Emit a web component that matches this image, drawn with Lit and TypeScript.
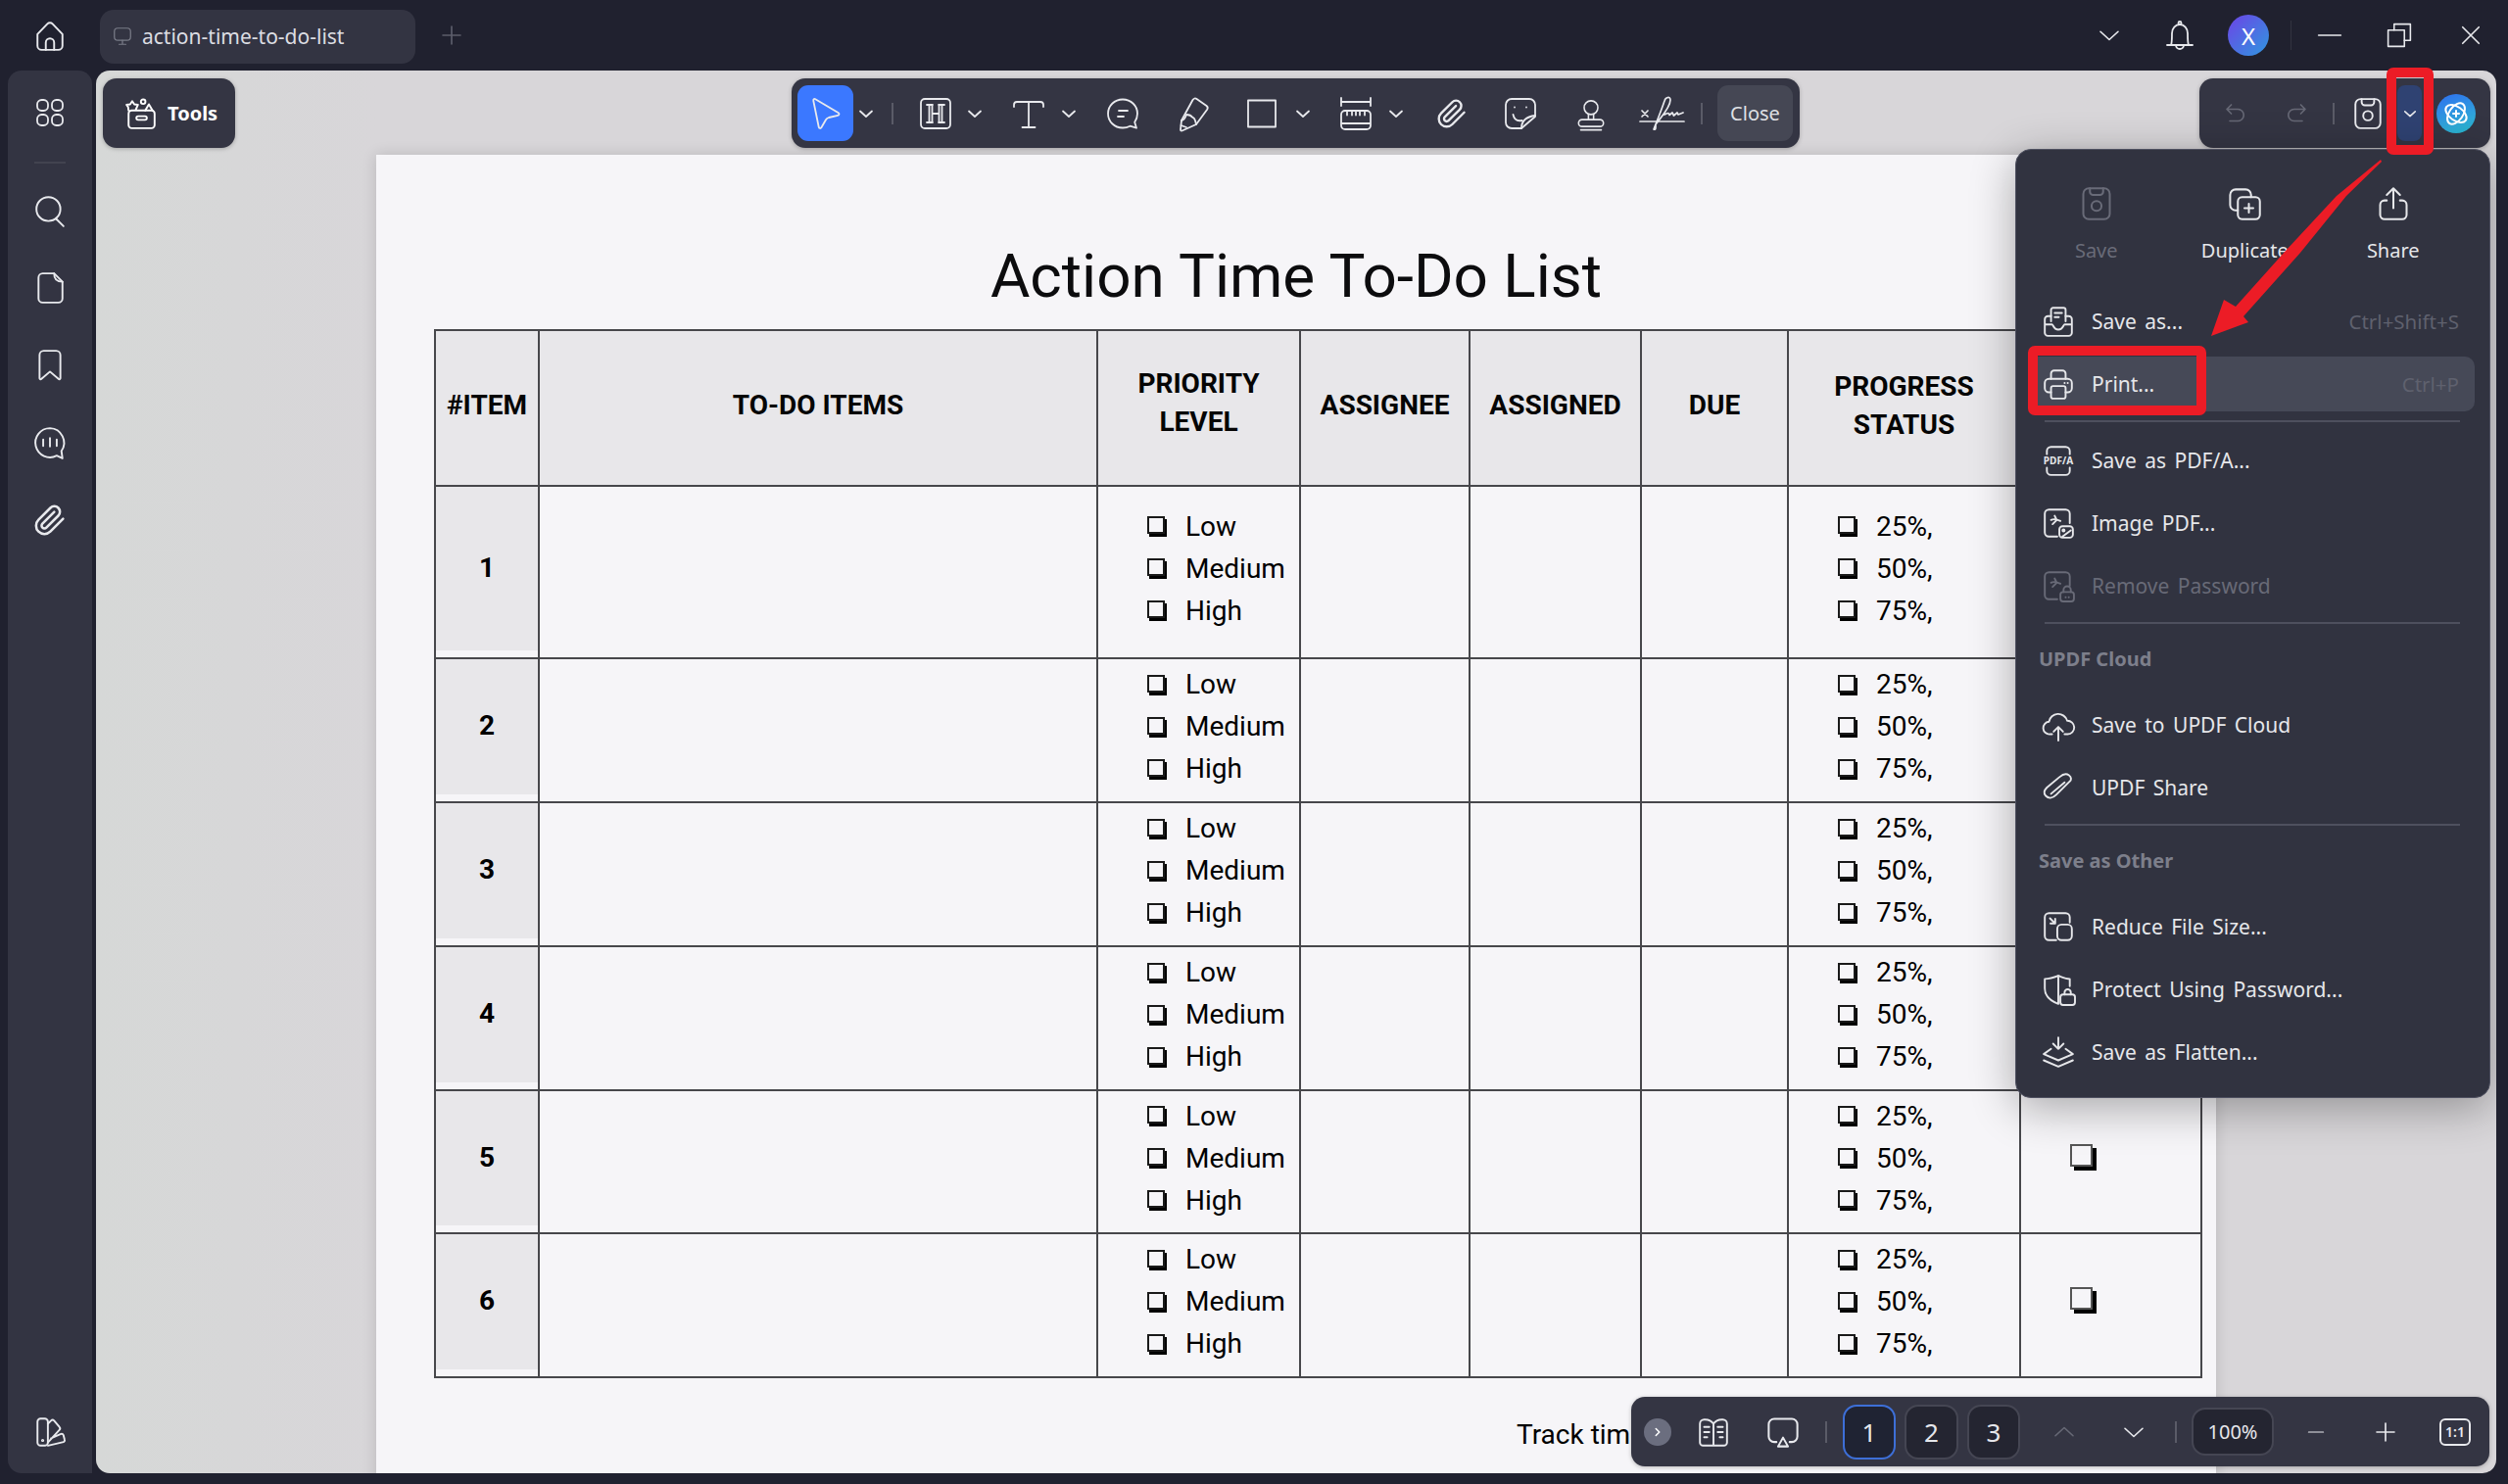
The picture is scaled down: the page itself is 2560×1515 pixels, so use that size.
import { LitElement, html, css, svg, TemplateResult } from "lit";
import { customElement } from "lit/decorators.js";

const P: Record<string, TemplateResult> = {
  home: svg`<path d="M4 15 13.500 5a3.500 3.500 0 0 1 5 0L28 15v11a4 4 0 0 1-4 4H8a4 4 0 0 1-4-4z"/><path d="M12 30v-7a4 4 0 0 1 8 0v7"/>`,
  monitor: svg`<rect x="4" y="4" width="24" height="18" rx="5"/><path d="M16 22v5M11 28h10"/>`,
  plus: svg`<path d="M16 4v24M4 16h24"/>`,
  grid: svg`<rect x="3" y="3" width="11" height="11" rx="4.500"/><rect x="18" y="3" width="11" height="11" rx="4.500"/><rect x="3" y="18" width="11" height="11" rx="4.500"/><rect x="18" y="18" width="11" height="11" rx="4.500"/>`,
  search: svg`<circle cx="14.500" cy="14.500" r="11.500"/><path d="m22 24 7 7"/>`,
  file: svg`<path d="M9 2h11l8 8v16a4 4 0 0 1-4 4H9a4 4 0 0 1-4-4V6a4 4 0 0 1 4-4z"/><path d="M20 2c0 5 3 8 8 8"/>`,
  bookmark: svg`<path d="M6 6a4 4 0 0 1 4-4h12a4 4 0 0 1 4 4v22.500a1 1 0 0 1-1.600.7L16 22l-8.400 7.200a1 1 0 0 1-1.600-.7z"/>`,
  chat: svg`<path d="M16 2a14 14 0 1 0 6.500 26.400L28 31l-1-7A14 14 0 0 0 16 2z"/><path d="M9.500 13v6M16 11.500v8M22.500 13v6"/>`,
  clip: svg`<g transform="scale(1.333)"><path d="m21.440 11.050-9.190 9.190a6 6 0 0 1-8.490-8.490l8.570-8.570A4 4 0 1 1 18 8.840l-8.590 8.570a2 2 0 0 1-2.830-2.830l8.490-8.480"/></g>`,
  link: svg`<path d="M27 10 14 23c-3 3-7 4-10 1s-1-6 1-8l12-10c3-2.500 6-4 9-2s2.500 5 1 6zM9 22 22 11"/>`,
  palette: svg`<rect x="4" y="3" width="10" height="26" rx="3"/><path d="m14 8 3-3c1-1 2-1 3 0l5 6c1 1 1 2 0 3l-11 12M17 22l9-4c1.500-.6 2.500 0 3 1l1 4c.3 1 0 2-1 2.500L14 29"/><circle cx="9" cy="24" r=".6"/>`,
  tools: svg`<rect x="4" y="13" width="25" height="17" rx="3"/><rect x="11.500" y="18.500" width="10" height="3.500" rx="1.700"/><path d="m4 13-.5-3.500L2 7.500l3.500-.5 2-3 2 3 3.500.5L11 12"/><circle cx="18" cy="4.500" r="2.200"/><path d="m20 13 3.500-6 3.500 6"/>`,
  arrow: svg`<path d="M3.300 3c-.3-1.500.8-2.500 2-1.800L28.500 15c1.500.9 1.200 2.500-.3 2.800L19 20c-1.500.4-2.300 1-3 2.200L11.500 30c-.9 1.500-2.500 1.200-2.800-.5z"/>`,
  heading: svg`<rect x="1" y="1" width="30" height="30" rx="4"/><path d="M7 7h6M19 7h6M9.500 7v18M22.500 7v18M12.500 7v18M19.500 7v18M12.500 16h7M7 25h6M19 25h6"/>`,
  text: svg`<path d="M1 9V7c0-2 1-3 3-3h24c2 0 3 1 3 3v2M16 4v25M9.500 30h13"/>`,
  comment: svg`<path d="M16 1.500C7.500 1.500 1 8 1 16s6.500 14.500 15 14.500c3 0 5.500-.8 7.500-1.800l6.500 2-1.800-6C30 22 31 19 31 16 31 8 24.500 1.500 16 1.500z"/><path d="M12 13h9M11 19h6"/>`,
  pen: svg`<path d="M14.500 2c1-1.500 2.500-2 4-1l10 7c1.300 1 1.500 2.500.7 3.800L18 27 3.500 33.500c-1 .3-1.500-.3-1.500-1.300L3 23z"/><path d="M3 23c3-.5 4-3 5-6 3 0 5 1 6.500 3 2 0 2.500 3 3.500 7M2.500 28 8 30"/>`,
  rect: svg`<rect x="2" y="2.500" width="28" height="27"/>`,
  measure: svg`<path d="M1 0v8M31 0v8M1 4h30"/><path d="M5 13h22a4 4 0 0 1 4 4v11a4 4 0 0 1-4 4H5a4 4 0 0 1-4-4V17a4 4 0 0 1 4-4zM1 26h30M7 13v4.500M12 13v4.500M16 13v4.500M20 13v4.500M25 13v4.500"/>`,
  sticky: svg`<path d="M17 31H7a6 6 0 0 1-6-6V7a6 6 0 0 1 6-6h18a6 6 0 0 1 6 6v12z"/><path d="M31 18c-8 1-14 5-14 13M10 9.500v.1M22 9.500v.1M8.500 17c1 5 4 7 9 6"/>`,
  stamp: svg`<circle cx="16" cy="9" r="8"/><path d="M13 16.500V23M19 16.500V23"/><rect x="1.500" y="23" width="29" height="8" rx="4"/><path d="M4 35h24"/>`,
  sign: svg`<path d="M0 26h45M2 15l6 6M8 15l-6 6"/><path d="M14 34c4-10 10-26 11-29 1-4 6-5 6-1 0 8-10 18-15 25 0 3 .5 6-2 5M25 19c3-2 5-2 5 .5l3-2.500 1.500 3 3.500-3 1 2 5-2"/>`,
  undo: svg`<path d="M10 4 4 10l6 6M4 10h15a8 8 0 0 1 0 16H8"/>`,
  redo: svg`<path d="m22 4 6 6-6 6M28 10H13a8 8 0 0 0 0 16h11"/>`,
  save: svg`<rect x="4" y="2" width="24" height="28" rx="5"/><path d="M10 2v3a3 3 0 0 0 3 3h6a3 3 0 0 0 3-3V2"/><circle cx="16" cy="18" r="4.500"/>`,
  duplicate: svg`<path d="M10 22H8a5 5 0 0 1-5-5V8a5 5 0 0 1 5-5h9a5 5 0 0 1 5 5v2"/><rect x="10" y="10" width="20" height="20" rx="4"/><path d="M20 16v8M16 20h8"/>`,
  share: svg`<path d="M16 20V2M10 8l6-6 6 6"/><path d="M10 13H8a4 4 0 0 0-4 4v9a4 4 0 0 0 4 4h16a4 4 0 0 0 4-4v-9a4 4 0 0 0-4-4h-2"/>`,
  saveas: svg`<path d="M9 16V5a2 2 0 0 1 2-2h10a2 2 0 0 1 2 2v11M12.500 8h7M12.500 12h4"/><path d="M9 11H6a3 3 0 0 0-3 3v13a3 3 0 0 0 3 3h20a3 3 0 0 0 3-3V14a3 3 0 0 0-3-3h-3M3 19h7c1 0 1.500 5 6 5s5-5 6-5h7"/>`,
  print: svg`<path d="M9 11V6a3 3 0 0 1 3-3h8a3 3 0 0 1 3 3v5"/><path d="M9 24H7a4 4 0 0 1-4-4v-5a4 4 0 0 1 4-4h18a4 4 0 0 1 4 4v5a4 4 0 0 1-4 4h-2"/><rect x="9" y="18" width="14" height="12" rx="2"/><path d="M22 15h.1M25 15h.1"/>`,
  pdfa: svg`<path d="M5 10V7a4 4 0 0 1 4-4h14a4 4 0 0 1 4 4v3M5 23v3a4 4 0 0 0 4 4h14a4 4 0 0 0 4-4v-3"/><text x="16" y="20" text-anchor="middle" font-size="9.500" font-weight="700" font-family="Noto Sans" word-spacing="0" fill="currentColor" stroke="none">PDF/A</text>`,
  imagepdf: svg`<path d="M15 29H7a4 4 0 0 1-4-4V7a4 4 0 0 1 4-4h16a4 4 0 0 1 4 4v9"/><path d="M9 13c3-1.500 6-.5 9 1M12.500 9l2 4-4 4"/><rect x="17" y="19" width="13" height="11" rx="3"/><circle cx="21" cy="23" r="1"/><path d="m20 29 8-6"/>`,
  lockdoc: svg`<path d="M15 29H7a4 4 0 0 1-4-4V7a4 4 0 0 1 4-4h16a4 4 0 0 1 4 4v9"/><path d="M9 13c3-1.500 6-.5 9 1M12.500 9l2 4-4 4"/><rect x="18" y="22" width="13" height="9" rx="2.500"/><path d="M21 22v-2a3.500 3.500 0 0 1 7 0v2M23 27h.1M26 27h.1"/>`,
  cloud: svg`<path d="M10 25H8a6 6 0 0 1-1-12 9 9 0 0 1 17.500-1 6.500 6.500 0 0 1 .5 13h-3"/><path d="M16 31V18M11.500 22.500 16 18l4.500 4.500"/>`,
  reduce: svg`<path d="M14 29H7a4 4 0 0 1-4-4V7a4 4 0 0 1 4-4h16a4 4 0 0 1 4 4v5"/><rect x="15" y="14" width="14" height="15" rx="4"/><path d="m8 8 5 5M13 8.500V13H8.500"/>`,
  protect: svg`<path d="M16 3C11 5 7 6 3 6v9c0 7 5 12 13 15z"/><path d="M16 3c3 1 7 3 11 3v7"/><rect x="18" y="21" width="14" height="10" rx="2.500"/><path d="M22 21v-2a3 3 0 0 1 6 0v2"/>`,
  flatten: svg`<path d="M16 2v11M11 8l5 5 5-5"/><path d="M9 13 2 18l14 6 14-6-7-5"/><path d="m2 24 14 6 14-6"/>`,
  chevron: svg`<path d="m4 11 12 11 12-11"/>`,
  up: svg`<path d="m4 21 12-11 12 11"/>`,
  right: svg`<path d="m12 8 8 8-8 8"/>`,
  bell: svg`<path d="M3 26h26M7 26c1-2 1-4 1-12a8 9 0 0 1 16 0c0 8 0 10 1 12"/><circle cx="16" cy="3.500" r="1.500"/><path d="M12 26a4 4 0 0 0 8 0"/>`,
  min: svg`<path d="M3 16h26"/>`,
  restore: svg`<rect x="3" y="10" width="19" height="19"/><path d="M10 10V3h19v19h-7"/>`,
  close: svg`<path d="m5 5 22 22M27 5 5 27"/>`,
  book: svg`<path d="M16 8c-2-3-5-4-8-4H7a4 4 0 0 0-4 4v18a3 3 0 0 0 3 3h10zM16 8c2-3 5-4 8-4h1a4 4 0 0 1 4 4v18a3 3 0 0 1-3 3H16z"/><path d="M7 11h5M7 16h5M7 21h3M20 11h5M20 16h5M22 21h3"/>`,
  present: svg`<path d="M10 25H8a5 5 0 0 1-5-5V9a5 5 0 0 1 5-5h16a5 5 0 0 1 5 5v11a5 5 0 0 1-5 5h-2"/><path d="m16 21 4.500 8h-9z"/>`,
  minus: svg`<path d="M5 16h22"/>`,
};

const ic = (n: string, cls = "s32") => html`<svg class="ic ${cls}" viewBox="0 0 32 32">${P[n]}</svg>`;

type Cell = { c: number; w: number; t: unknown; k?: string };
const seq = (start: number, cells: Cell[]) => {
  let end = start;
  return cells.map((x) => {
    const ml = x.c - x.w / 2 - end;
    end = x.c + x.w / 2;
    return html`<div class="cell ${x.k ?? ""}" style="margin-left:${ml}px;width:${x.w}px">${x.t}</div>`;
  });
};

const rows: { h: number; n: string }[] = [
  { h: 176, n: "1" }, { h: 147, n: "2" }, { h: 147, n: "3" }, { h: 147, n: "4" }, { h: 146, n: "5" }, { h: 147, n: "6" },
];
const heads = ["#ITEM", "TO-DO ITEMS", "PRIORITY<br>LEVEL", "ASSIGNEE", "ASSIGNED", "DUE", "PROGRESS<br>STATUS", ""];

@customElement("app-root")
export class AppRoot extends LitElement {
  static styles = css`
    :host { display: block; position: relative; width: 2560px; height: 1515px; overflow: hidden; background: #20212f; color: #e8e9ed; font-family: "Noto Sans", sans-serif; }
    .ic { fill: none; stroke: currentColor; stroke-width: 1.8; stroke-linecap: round; stroke-linejoin: round; overflow: visible; flex: none; display: block; }
    .s14 { width: 14px; height: 14px; stroke-width: 3.5; } .s16 { width: 16px; height: 16px; stroke-width: 3.6; } .s18 { width: 18px; height: 18px; } .s20 { width: 20px; height: 20px; } .s22 { width: 22px; height: 22px; }
    .s24 { width: 24px; height: 24px; stroke-width: 2.2; } .s28 { width: 28px; height: 28px; } .s32 { width: 32px; height: 32px; } .s34 { width: 34px; height: 34px; } .s36 { width: 36px; height: 36px; }
    .signic { width: 45px; height: 36px; stroke-width: 1.7; }
    .shell { display: grid; grid-template-columns: 98px 2450px; grid-template-rows: 72px 1432px; height: 100%; }
    .cell { flex: none; display: flex; align-items: center; justify-content: center; }

    .top { grid-column: 1 / 3; display: flex; align-items: center; width: 2560px; }
    .homecell { width: 102px; flex: none; display: flex; justify-content: center; }
    .tab { width: 322px; height: 55px; flex: none; margin-top: 2px; box-sizing: border-box; padding: 0 12px; background: #333442; border-radius: 14px; display: flex; align-items: center; gap: 9px; font-size: 21px; color: #dcdde2; }
    .tab .ic { color: #7a7c88; }
    .addtab { margin-left: 25px; color: #5c5e6b; }
    .winctl { margin-left: auto; display: flex; align-items: center; width: 430px; height: 72px; }
    .avatar { width: 42px; height: 42px; border-radius: 50%; background: linear-gradient(135deg, #6d43e6, #2f97e0); display: flex; align-items: center; justify-content: center; font-size: 24px; color: #fff; }
    .tick { width: 1px; height: 30px; background: #33343f; }

    .side { margin-left: 8px; width: 86px; height: 1432px; box-sizing: border-box; padding: 15px 0 22px; background: #333442; border-radius: 14px 14px 0 14px; display: flex; flex-direction: column; align-items: center; }
    .sidecell { height: 79px; display: flex; align-items: center; justify-content: center; }
    .sidecell.first { height: 56px; }
    .sidesep { width: 32px; height: 2px; background: #42434f; margin: 22px 0 8px; }
    .sidecell.last { margin-top: auto; height: 40px; }

    .viewer { position: relative; width: 2450px; height: 1432px; overflow: hidden; border-radius: 14px; background: linear-gradient(90deg, #d6d8d7, #d8d6d9 286px); padding: 86px 0 0 286px; box-sizing: border-box; }
    .page { width: 1878px; height: 1400px; background: #f6f5f8; box-shadow: 0 0 14px rgba(0, 0, 0, .14); color: #000; font-family: Roboto, sans-serif; }
    .title { font-size: 62px; line-height: 80px; padding-top: 84px; text-align: center; color: #0c0c0e; }
    table { margin: 14px 0 0 59px; width: 1803px; table-layout: fixed; border-collapse: collapse; font-size: 28px; }
    td, th { border: 2px solid #47474b; padding: 0 0 8px; box-sizing: border-box; }
    th { background: #e8e7ea; height: 159px; font-weight: 700; line-height: 39px; padding-bottom: 6px; font-size: 28px; color: #050505; }
    th:nth-child(3) { padding-bottom: 12px; }
    td.num { background: linear-gradient(#e8e7ea calc(100% - 7px), transparent 0); text-align: center; font-weight: 700; font-size: 28px; padding-bottom: 10px; }
    .c1 { width: 106px; } .c2 { width: 570px; } .c3 { width: 207px; } .c4 { width: 173px; } .c5 { width: 175px; } .c6 { width: 150px; } .c7 { width: 237px; } .c8 { width: 185px; }
    .opts { display: flex; flex-direction: column; padding-left: 50px; }
    .opt { display: flex; align-items: center; height: 43px; white-space: nowrap; }
    .box { width: 18px; height: 18px; border: 2px solid #1a1a1a; box-shadow: 2px 3px 0 #000; box-sizing: border-box; background: #f6f5f8; margin: -2px 21px 0 0; flex: none; }
    .box.big { width: 23px; height: 23px; box-shadow: 4px 4px 0 #000; margin: 0 0 6px 50px; border-color: #555; }
    .foot { font-size: 28px; line-height: 34px; margin: 41px 0 0 1164px; white-space: nowrap; }

    .bar { position: absolute; background: #343543; border-radius: 14px; box-shadow: 0 1px 4px rgba(0, 0, 0, .25); display: flex; align-items: center; box-sizing: border-box; }
    .toolsbtn { left: 7px; top: 8px; width: 135px; height: 71px; padding-left: 22px; gap: 10px; font-size: 20px; font-weight: 700; color: #fff; }
    .toolbar { left: 710px; top: 8px; width: 1029px; height: 71px; }
    .rightbar { left: 2147px; top: 8px; width: 297px; height: 71px; }
    .zoombar { left: 1567px; top: 1354px; width: 876px; height: 71px; }
    .sel { height: 57px; background: #3b78ff; border-radius: 11px; }
    .vs { width: 2px; height: 22px; background: #5a5b67; }
    .closebtn { height: 57px; background: #454754; border-radius: 11px; font-size: 20px; color: #dfe0e4; }
    .dim { color: #666875; }
    .dd { height: 57px; background: #2f4272; border-radius: 8px; }
    .ai { width: 40px; height: 40px; border-radius: 50%; background: linear-gradient(160deg, #2f6ff0, #2fa8d8 70%, #25b6c8); color: #fff; display: flex; align-items: center; justify-content: center; }
    .ai .ic { stroke-width: 2; }
    .nub { width: 28px; height: 28px; border-radius: 50%; background: #6b6e7f; display: flex; align-items: center; justify-content: center; color: #fff; }
    .pg { background: #242531; border: 2px solid #454653; border-radius: 14px; height: 56px; box-sizing: border-box; font-size: 26px; color: #e6e7eb; }
    .pg.on { border-color: #3d6fd8; background: #1f2333; }
    .pct { height: 49px; font-size: 20px; }
    .ratio { width: 32px; height: 28px; border: 2px solid #e8e9ed; border-radius: 6px; box-sizing: border-box; font-size: 14px; font-weight: 600; display: flex; align-items: center; justify-content: center; }

    .menu { position: absolute; left: 1959px; top: 80px; width: 485px; height: 969px; box-sizing: border-box; display: flex; flex-direction: column; background: #313340; border: 1px solid #4f5161; border-radius: 16px; box-shadow: 0 10px 46px rgba(0, 0, 0, .32); padding: 0 15px 0 12px; font-size: 21px; }
    .quick { display: grid; grid-template-columns: repeat(3, 151.5px); margin-left: -6px; padding: 37px 0 26px; flex: none; }
    .q { display: flex; flex-direction: column; align-items: center; font-size: 20px; line-height: 28px; gap: 16px; color: #e6e7ea; }
    .q.off { color: #696b78; }
    .row { height: 56px; flex: none; margin: 4px 0; display: flex; align-items: center; padding: 0 16px 0 14px; gap: 17px; border-radius: 10px; color: #e6e7ea; white-space: nowrap; word-spacing: 3px; }
    .row.hover { background: #464957; }
    .row.off { color: #686a77; }
    .short { margin-left: auto; font-size: 20.5px; color: #5f616e; word-spacing: 0; }
    .sep { height: 2px; flex: none; margin: 5px 15px 7px 17px; background: #4e505e; }
    .head { height: 30px; flex: none; line-height: 30px; margin: 14px 0 20px 11px; font-size: 20px; font-weight: 700; color: #7d7f8b; }
    .overlay { position: absolute; left: 0; top: 0; width: 2560px; height: 1515px; pointer-events: none; }
  `;

  private opts(a: string[]) {
    return html`<div class="opts">${a.map((t) => html`<div class="opt"><span class="box"></span>${t}</div>`)}</div>`;
  }

  private menuRow(i: string, t: string, cls = "", short = "") {
    return html`<div class="row ${cls}">${ic(i, "s34")}<span>${t}</span>${short ? html`<span class="short">${short}</span>` : ""}</div>`;
  }

  render() {
    const chev = ic("chevron", "s16");
    return html`<div class="shell">
        <header class="top">
          <div class="homecell">${ic("home", "s34")}</div>
          <div class="tab">${ic("monitor", "s22")}<span>action-time-to-do-list</span></div>
          <div class="addtab">${ic("plus", "s24")}</div>
          <div class="winctl">
            ${seq(2130, [
              { c: 2153, w: 24, t: ic("chevron", "s24") },
              { c: 2225, w: 32, t: ic("bell", "s32") },
              { c: 2295, w: 42, t: html`<div class="avatar">X</div>` },
              { c: 2338, w: 2, t: html`<div class="tick"></div>` },
              { c: 2378, w: 28, t: ic("min", "s28") },
              { c: 2449, w: 28, t: ic("restore", "s28") },
              { c: 2522, w: 26, t: ic("close", "s24") },
            ])}
          </div>
        </header>

        <nav class="side">
          <div class="sidecell first">${ic("grid")}</div>
          <div class="sidesep"></div>
          <div class="sidecell">${ic("search", "s34")}</div>
          <div class="sidecell">${ic("file", "s34")}</div>
          <div class="sidecell">${ic("bookmark", "s34")}</div>
          <div class="sidecell">${ic("chat", "s34")}</div>
          <div class="sidecell">${ic("clip", "s34")}</div>
          <div class="sidecell last">${ic("palette", "s34")}</div>
        </nav>

        <main class="viewer">
          <section class="page">
            <div class="title">Action Time To-Do List</div>
            <table>
              <colgroup>
                <col class="c1" /><col class="c2" /><col class="c3" /><col class="c4" /><col class="c5" /><col class="c6" /><col class="c7" /><col class="c8" />
              </colgroup>
              <tr>${heads.map((h) => {
                const [a, b] = h.split("<br>");
                return html`<th>${a}${b ? html`<br />${b}` : ""}</th>`;
              })}</tr>
              ${rows.map(
                (r) => html`<tr style="height:${r.h}px">
                  <td class="num">${r.n}</td><td></td>
                  <td>${this.opts(["Low", "Medium", "High"])}</td>
                  <td></td><td></td><td></td>
                  <td>${this.opts(["25%,", "50%,", "75%,"])}</td>
                  <td><div class="box big"></div></td>
                </tr>`
              )}
            </table>
            <div class="foot">Track time</div>
          </section>

          <div class="bar toolsbtn">${ic("tools", "s34")}<span>Tools</span></div>

          <div class="bar toolbar">
            ${seq(808, [
              { c: 842.5, w: 57, k: "sel", t: ic("arrow", "s32") },
              { c: 884, w: 20, t: chev },
              { c: 911, w: 2, k: "vs", t: "" },
              { c: 955, w: 36, t: ic("heading", "s32") },
              { c: 995, w: 20, t: chev },
              { c: 1050, w: 40, t: ic("text", "s32") },
              { c: 1091, w: 20, t: chev },
              { c: 1146, w: 36, t: ic("comment", "s32") },
              { c: 1219, w: 36, t: ic("pen", "s32") },
              { c: 1288, w: 36, t: ic("rect", "s32") },
              { c: 1330, w: 20, t: chev },
              { c: 1384, w: 36, t: ic("measure", "s32") },
              { c: 1425, w: 20, t: chev },
              { c: 1482, w: 36, t: ic("clip", "s32") },
              { c: 1552, w: 36, t: ic("sticky", "s32") },
              { c: 1624, w: 36, t: ic("stamp", "s28") },
              { c: 1696, w: 46, t: html`<svg class="ic signic" viewBox="0 0 45 36">${P.sign}</svg>` },
              { c: 1737, w: 2, k: "vs", t: "" },
              { c: 1791.5, w: 77, k: "closebtn", t: "Close" },
            ])}
          </div>

          <div class="bar rightbar">
            ${seq(2245, [
              { c: 2282, w: 28, k: "dim", t: ic("undo", "s24") },
              { c: 2344, w: 28, k: "dim", t: ic("redo", "s24") },
              { c: 2382, w: 2, k: "vs", t: "" },
              { c: 2417, w: 34, t: ic("save", "s34") },
              { c: 2459.5, w: 25, k: "dd", t: ic("chevron", "s14") },
              { c: 2507, w: 40, t: html`<div class="ai"><svg class="ic s32" viewBox="0 0 32 32">
                <ellipse cx="16" cy="16" rx="12" ry="7" transform="rotate(35 16 16)" />
                <ellipse cx="16" cy="16" rx="12" ry="7" transform="rotate(-55 16 16)" />
                <path d="M16 13v6M13 16h6" />
              </svg></div>` },
            ])}
          </div>

          <div class="bar zoombar">
            ${seq(1665, [
              { c: 1692, w: 28, t: html`<div class="nub">${ic("right", "s14")}</div>` },
              { c: 1749, w: 34, t: ic("book", "s34") },
              { c: 1820, w: 36, t: ic("present", "s36") },
              { c: 1864, w: 2, k: "vs", t: "" },
              { c: 1908, w: 54, k: "pg on", t: "1" },
              { c: 1971.5, w: 55, k: "pg", t: "2" },
              { c: 2035, w: 54, k: "pg", t: "3" },
              { c: 2107, w: 24, k: "dim", t: ic("up", "s24") },
              { c: 2178, w: 24, t: ic("chevron", "s24") },
              { c: 2221, w: 2, k: "vs", t: "" },
              { c: 2279, w: 84, k: "pg pct", t: "100%" },
              { c: 2364, w: 24, t: ic("minus", "s22") },
              { c: 2435, w: 26, t: ic("plus", "s24") },
              { c: 2506, w: 32, t: html`<div class="ratio">1:1</div>` },
            ])}
          </div>

          <aside class="menu">
            <div class="quick">
              <div class="q off">${ic("save", "s36")}<span>Save</span></div>
              <div class="q">${ic("duplicate", "s36")}<span>Duplicate</span></div>
              <div class="q">${ic("share", "s36")}<span>Share</span></div>
            </div>
            ${this.menuRow("saveas", "Save as...", "", "Ctrl+Shift+S")}
            ${this.menuRow("print", "Print...", "hover", "Ctrl+P")}
            <div class="sep"></div>
            ${this.menuRow("pdfa", "Save as PDF/A...")}
            ${this.menuRow("imagepdf", "Image PDF...")}
            ${this.menuRow("lockdoc", "Remove Password", "off")}
            <div class="sep"></div>
            <div class="head">UPDF Cloud</div>
            ${this.menuRow("cloud", "Save to UPDF Cloud")}
            ${this.menuRow("link", "UPDF Share")}
            <div class="sep"></div>
            <div class="head">Save as Other</div>
            ${this.menuRow("reduce", "Reduce File Size...")}
            ${this.menuRow("protect", "Protect Using Password...")}
            ${this.menuRow("flatten", "Save as Flatten...")}
          </aside>
        </main>
      </div>

      <svg class="overlay" viewBox="0 0 2560 1515">
        <rect x="2441" y="74" width="38" height="79" rx="2" fill="none" stroke="#ec1c26" stroke-width="10" />
        <rect x="2075" y="358" width="172" height="61" rx="2" fill="none" stroke="#ec1c26" stroke-width="10" />
        <polygon fill="#ec1c26" points="2430,163 2431,165 2395,200 2348,258 2290,323 2295,329 2257,343 2270,306 2282,313 2333,256 2385,200" />
      </svg>`;
  }
}
